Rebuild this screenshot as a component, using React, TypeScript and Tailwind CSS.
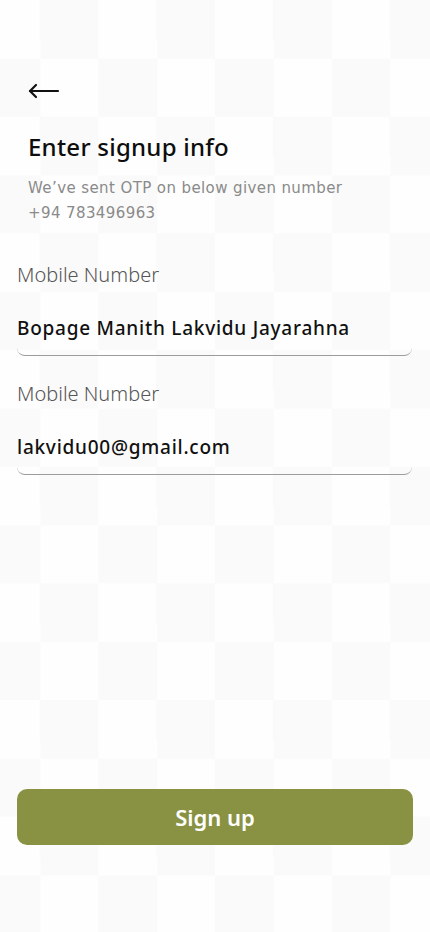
import React from "react";

function Field({ label, value }: { label: string; value: string }) {
  return (
    <div className="flex flex-col">
      <div className="text-[20px] leading-[28px] font-light text-[#555555] [font-family:'Noto_Sans',sans-serif]">
        {label}
      </div>
      <div className="mt-[25px] rounded-b-[8px] border-b border-[#9c9c9c] pb-[13px] text-[19px] leading-[28px] font-medium tracking-[0.75px] text-[#111111] [font-family:'Noto_Sans',sans-serif]">
        {value}
      </div>
    </div>
  );
}

export default function App() {
  return (
    <div className="flex min-h-screen w-full flex-col bg-[repeating-conic-gradient(#fafafa_0_25%,#fefefe_0_50%)] bg-[length:116.67px_116.67px] bg-[position:-18.33px_0px]">
      <div className="px-[28px]">
        <svg
          className="mt-[83px] block"
          width="32"
          height="16"
          viewBox="0 0 32 16"
          fill="none"
          stroke="#111111"
          strokeWidth="2.2"
          strokeLinecap="round"
          strokeLinejoin="round"
        >
          <path d="M2 8H30" />
          <path d="M8 2L2 8L8 14" />
        </svg>
        <h1 className="mt-[32px] text-[24px] leading-[32px] font-medium tracking-[0.25px] text-[#0d0d0d] [font-family:'Noto_Sans',sans-serif]">
          Enter signup info
        </h1>
        <p className="mt-[13px] text-[15px] leading-[25px] tracking-[0.4px] text-[#8a8a8a] [font-family:'DejaVu_Sans',sans-serif]">
          We’ve sent OTP on below given number
          <br />
          +94 783496963
        </p>
      </div>
      <div className="mt-[35px] flex flex-col gap-[24px] pl-[17px] pr-[18px]">
        <Field label="Mobile Number" value="Bopage Manith Lakvidu Jayarahna" />
        <Field label="Mobile Number" value="lakvidu00@gmail.com" />
      </div>
      <div className="mt-auto px-[17px] pb-[87px]">
        <button className="flex h-[56px] w-full items-center justify-center rounded-[10px] bg-[#899243] text-[22px] font-semibold text-white [font-family:'Noto_Sans',sans-serif]">
          Sign up
        </button>
      </div>
    </div>
  );
}
